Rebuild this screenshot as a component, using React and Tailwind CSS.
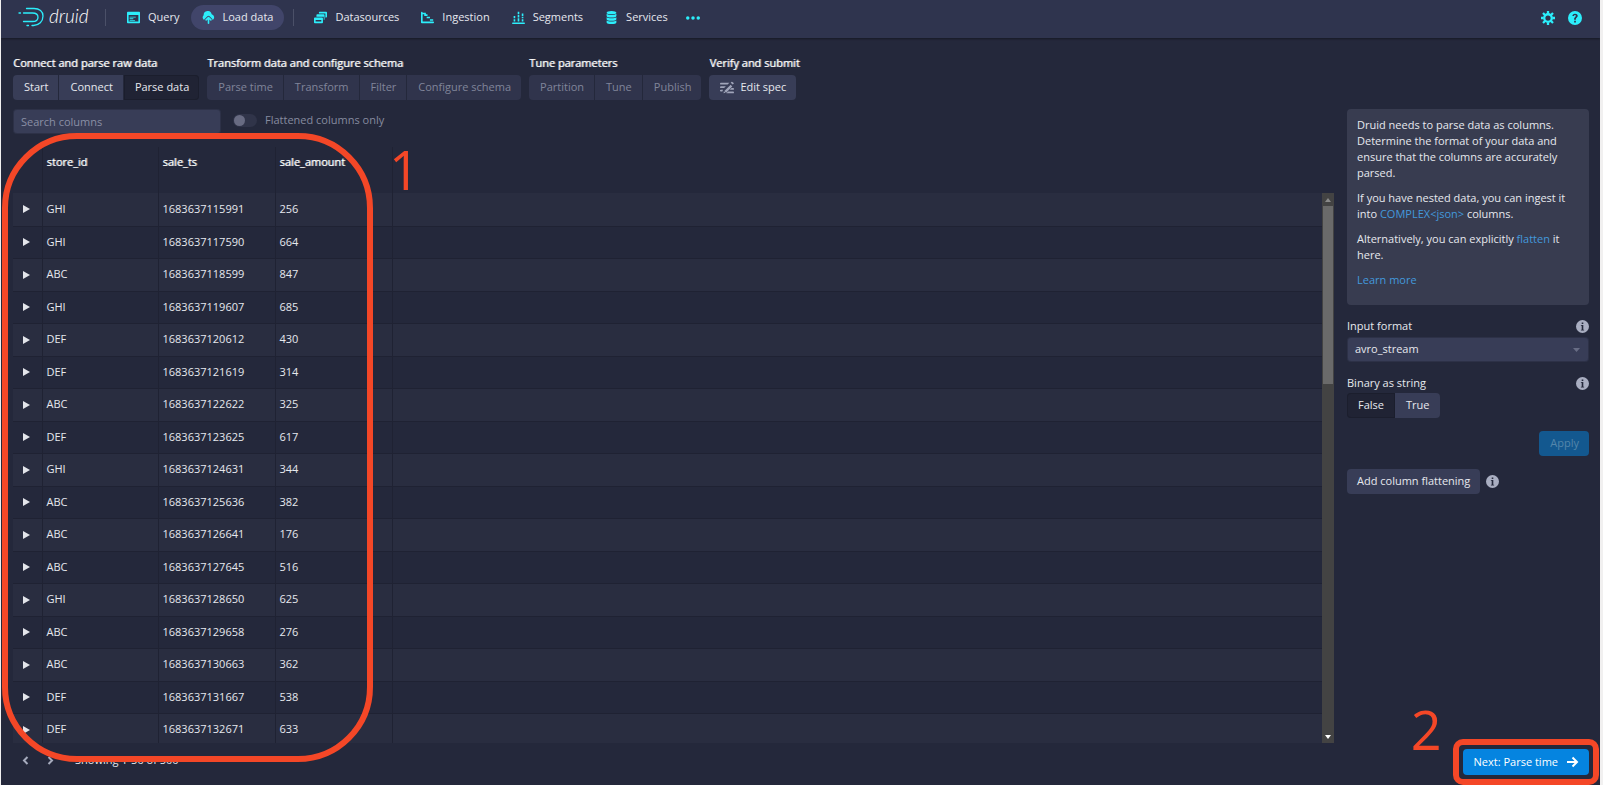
import { useState } from 'react'

const ROWS = [
  ['GHI', '1683637115991', '256'],
  ['GHI', '1683637117590', '664'],
  ['ABC', '1683637118599', '847'],
  ['GHI', '1683637119607', '685'],
  ['DEF', '1683637120612', '430'],
  ['DEF', '1683637121619', '314'],
  ['ABC', '1683637122622', '325'],
  ['DEF', '1683637123625', '617'],
  ['GHI', '1683637124631', '344'],
  ['ABC', '1683637125636', '382'],
  ['ABC', '1683637126641', '176'],
  ['ABC', '1683637127645', '516'],
  ['GHI', '1683637128650', '625'],
  ['ABC', '1683637129658', '276'],
  ['ABC', '1683637130663', '362'],
  ['DEF', '1683637131667', '538'],
  ['DEF', '1683637132671', '633'],
]

const STEP_GROUPS = [
  { title: 'Connect and parse raw data', steps: ['Start', 'Connect', 'Parse data'], enabled: true },
  { title: 'Transform data and configure schema', steps: ['Parse time', 'Transform', 'Filter', 'Configure schema'] },
  { title: 'Tune parameters', steps: ['Partition', 'Tune', 'Publish'] },
]

const ICONS = {
  query: 'M15 1H1a1 1 0 0 0-1 1v12a1 1 0 0 0 1 1h14a1 1 0 0 0 1-1V2a1 1 0 0 0-1-1zm-1 12H2V5h12v8zM3.5 8h7a.5.5 0 0 0 0-1h-7a.5.5 0 0 0 0 1zm0 2h4a.5.5 0 0 0 0-1h-4a.5.5 0 0 0 0 1zm0 2h6a.5.5 0 0 0 0-1h-6a.5.5 0 0 0 0 1z',
  upload: 'M8.7 7.3a1 1 0 0 0-1.4 0l-3 3a1 1 0 0 0 1.4 1.4L7 10.4V15a1 1 0 0 0 2 0v-4.6l1.3 1.3a1 1 0 0 0 1.4-1.4l-3-3zM12 4h-.1A5 5 0 0 0 2 5v.3A3.500 3.500 0 0 0 2.600 11a2 2 0 0 1 1-1.600l3-3a2 2 0 0 1 2.800 0l3 3c.4.400.6 1 .6 1.600A3.800 3.800 0 0 0 12 4z',
  datasources: 'M1 8a1 1 0 0 0-1 1v5a1 1 0 0 0 1 1h9a1 1 0 0 0 1-1V9a1 1 0 0 0-1-1zm1 3h7v2H2zM3 7V5a1 1 0 0 1 1-1h8a1 1 0 0 1 1 1v5a1 1 0 0 1-1 1V7zM6 3V2a1 1 0 0 1 1-1h8a1 1 0 0 1 1 1v5a1 1 0 0 1-1 1h-1V3z',
  ingestion: 'M4 6h4V4H4zm3 3h4V7H7zm4 1v2h4v-2zM15 13H2V2a1 1 0 0 0-2 0v12a1 1 0 0 0 1 1h14a1 1 0 0 0 0-2zM2 2h4v2H2z',
  segments: 'M15 14H1a1 1 0 0 0 0 2h14a1 1 0 0 0 0-2zM2 10h2v3H2zM2 6h2v3H2zM7 9h2v4H7zM7 5h2v3H7zM7 1h2v3H7zM12 10h2v3h-2zM12 7h2v2h-2zM12 3h2v3h-2z',
  services: 'M8 4c3.300 0 6-.9 6-2s-2.700-2-6-2-6 .9-6 2 2.700 2 6 2zm-6-.5V6c0 1.100 2.700 2 6 2s6-.9 6-2V3.500C13 4.500 10.700 5 8 5s-5-.5-6-1.500zM2 7.600V10c0 1.100 2.700 2 6 2s6-.9 6-2V7.600C13 8.500 10.700 9 8 9s-5-.5-6-1.400zm0 4V14c0 1.100 2.700 2 6 2s6-.9 6-2v-2.400c-1 .9-3.300 1.400-6 1.400s-5-.5-6-1.400z',
  more: 'M2 6a2 2 0 1 0 0 4 2 2 0 0 0 0-4zm6 0a2 2 0 1 0 0 4 2 2 0 0 0 0-4zm6 0a2 2 0 1 0 0 4 2 2 0 0 0 0-4z',
  help: 'M8 0a8 8 0 1 0 0 16A8 8 0 0 0 8 0zM7 13v-2h2v2zm4-6.700c-.2.500-.6.900-1.100 1.400-.5.500-.9.800-.9 1.300V10H7V9c0-1 .6-1.600 1.200-2.200.5-.5.8-.8.8-1.300 0-.6-.4-.9-1-.9s-1.100.4-1.100 1.200H5C5 4 6.200 3 8 3s3.100.9 3.100 2.400c0 .3 0 .6-.1.900z',
  info: 'M8 0a8 8 0 1 0 0 16A8 8 0 0 0 8 0zM7 3h2v2H7zm3 10H6v-1h1V7H6V6h3v6h1z',
  edit: 'M1 8h3.700l2-2H1a1 1 0 0 0 0 2zm0-4h7.700l2-2H1a1 1 0 0 0 0 2zm0 6a1 1 0 0 0-.1 2h1.800l.8-2zm11.200-5.800L5 11.400 7 13.400l7-7.200zM15.700 2.300l-1.500-1.200a.9.900 0 0 0-1.200 0l-.8.900 2.300 2 1-.9a.6.600 0 0 0 .2-.800zM4 14l2.200-.5-1.700-1.700zM15 8h-1.800l-2 2H15a1 1 0 0 0 0-2zm0 4H9.300l-2 2H15a1 1 0 0 0 0-2z',
}

function Icon({ name, className = 'size-[13px]' }) {
  return (
    <svg viewBox="0 0 16 16" className={`shrink-0 ${className}`} fill="currentColor" fillRule="evenodd" aria-hidden="true">
      <path d={ICONS[name]} />
    </svg>
  )
}

function Cog() {
  return (
    <svg viewBox="0 0 16 16" className="size-[14px] text-[#2ceefb]" fill="none" stroke="currentColor" aria-hidden="true">
      <circle cx="8" cy="8" r="4.300" strokeWidth="2.600" />
      <path d="M8 0v3M8 13v3M0 8h3M13 8h3M2.300 2.300l2.200 2.200M11.500 11.500l2.200 2.200M2.300 13.700l2.200-2.200M11.500 4.500l2.200-2.200" strokeWidth="2.600" />
    </svg>
  )
}

function Logo() {
  return (
    <a href="#home" className="flex w-[73px] items-center text-white">
      <svg viewBox="0 0 27 21" className="h-[21px] w-[27px] shrink-0" fill="none" stroke="#2ceefb" strokeWidth="1.300" strokeLinecap="round" aria-hidden="true">
        <path d="M9.500 1.500h7.500c5.500 0 9 3 9 7.500 0 5.500-4 9.500-9.500 9.500H15" />
        <path d="M6.500 6h9c3.500 0 5.500 1.500 5.500 4.200 0 3-2.500 4.300-5.500 4.300H6.500M2 6h1.500M10 18.500h1.500" />
      </svg>
      <span className="ml-[5px] pb-[3px] font-['Lato',sans-serif] text-[19px] leading-6 font-light italic">druid</span>
    </a>
  )
}

function NavButton({ icon, active, children }) {
  return (
    <button className={`flex h-[25px] items-center gap-2 rounded-full px-[11px] ${active ? 'bg-[#41456a]' : 'hover:bg-[#393e5c]'}`}>
      <Icon name={icon} className="size-[13px] text-[#2ceefb]" />
      {children}
    </button>
  )
}

function Header() {
  return (
    <header className="flex h-[38px] shrink-0 items-center bg-[#2f344e] pb-[3px] pl-4 shadow-[0_1px_2px_rgba(0,0,0,0.4)]">
      <Logo />
      <div className="ml-[15px] h-[17px] w-px bg-[#4b5068]" />
      <nav className="ml-[10px] flex items-center">
        <NavButton icon="query">Query</NavButton>
        <NavButton icon="upload" active>Load data</NavButton>
        <div className="mx-[9px] h-[17px] w-px bg-[#4b5068]" />
        <NavButton icon="datasources">Datasources</NavButton>
        <NavButton icon="ingestion">Ingestion</NavButton>
        <NavButton icon="segments">Segments</NavButton>
        <NavButton icon="services">Services</NavButton>
        <button aria-label="More" className="ml-[7px]"><Icon name="more" className="size-[14px] text-[#2ceefb]" /></button>
      </nav>
      <div className="ml-auto flex items-center gap-[13px] pr-[18px]">
        <button aria-label="Settings"><Cog /></button>
        <button aria-label="Help"><Icon name="help" className="size-[14px] text-[#2ceefb]" /></button>
      </div>
    </header>
  )
}

function StepTitle({ children }) {
  return <div className="mb-1 leading-4 text-white [text-shadow:1px_0_0_rgba(255,255,255,0.6)]">{children}</div>
}

function StepNav() {
  const [current, setCurrent] = useState('Parse data')
  return (
    <div className="flex gap-2">
      {STEP_GROUPS.map(group => (
        <div key={group.title}>
          <StepTitle>{group.title}</StepTitle>
          <div className="flex gap-px">
            {group.steps.map(step => (
              <button key={step} disabled={!group.enabled} onClick={() => setCurrent(step)}
                className={`h-[25px] pr-[10px] pl-[11px] first:rounded-l-sm last:rounded-r-sm ${
                  !group.enabled ? 'bg-[#30344c] text-[#80859a]'
                    : step === current ? 'bg-[#202334] shadow-[inset_0_0_0_1px_#1b1e2d]' : 'bg-[#383d57]'
                }`}>
                {step}
              </button>
            ))}
          </div>
        </div>
      ))}
      <div>
        <StepTitle>Verify and submit</StepTitle>
        <button className="flex h-[25px] items-center gap-[6px] rounded-sm bg-[#383d57] pr-[10px] pl-[11px]">
          <Icon name="edit" className="size-[14px] text-[#a0a5ba]" />
          Edit spec
        </button>
      </div>
    </div>
  )
}

function DataTable() {
  return (
    <div className="flex min-h-0 flex-1 flex-col">
      <div className="relative min-h-0 flex-1 overflow-hidden">
        <table className="w-full table-fixed border-collapse text-left">
          <colgroup>
            <col className="w-[29px]" />
            <col className="w-[116px]" />
            <col className="w-[117px]" />
            <col className="w-[117px]" />
            <col />
          </colgroup>
          <thead>
            <tr className="h-[46px]">
              <th className="border-r border-[#1f2233]"></th>
              {['store_id', 'sale_ts', 'sale_amount'].map(c => (
                <th key={c} className="border-r border-[#1f2233] pb-4 pl-1 font-normal text-white [text-shadow:1px_0_0_rgba(255,255,255,0.6)]">{c}</th>
              ))}
              <th></th>
            </tr>
          </thead>
          <tbody>
            {ROWS.map(row => (
              <tr key={row[1]} className="border-b border-[#1f2233] odd:h-[33px] odd:bg-[#292d40] even:h-8">
                <td className="border-r border-[#1f2233] pl-[10px]">
                  <button aria-label="Expand row" className="block">
                    <svg viewBox="0 0 7 8" className="h-2 w-[7px]" fill="#e3e5ea"><path d="M0 0l7 4-7 4z" /></svg>
                  </button>
                </td>
                {row.map((v, i) => (
                  <td key={i} className="border-r border-[#1f2233] pl-1">{v}</td>
                ))}
                <td></td>
              </tr>
            ))}
          </tbody>
        </table>
        {/* scroll track lies over the end of the rows */}
        <div className="absolute top-[46px] right-0 bottom-0 flex w-3 flex-col items-center bg-[#434343]">
          <svg viewBox="0 0 12 13" className="h-[13px] w-3 shrink-0" fill="#8a8a8a"><path d="M3 9l3-4 3 4z" /></svg>
          <div className="h-[178px] w-[10px] bg-[#6a6a6a]" />
          <svg viewBox="0 0 12 13" className="mt-auto h-[13px] w-3 shrink-0" fill="#ffffff"><path d="M3 5l3 4 3-4z" /></svg>
        </div>
      </div>
      <div className="flex h-[42px] shrink-0 items-start pt-[9px] pl-[9px]">
        <button aria-label="Previous page" className="pt-1">
          <svg viewBox="0 0 7 9" className="h-[9px] w-[7px]" fill="none" stroke="#a6abbd" strokeWidth="2"><path d="M5.500 1L2 4.500 5.500 8" /></svg>
        </button>
        <button aria-label="Next page" className="ml-[18px] pt-1">
          <svg viewBox="0 0 7 9" className="h-[9px] w-[7px]" fill="none" stroke="#a6abbd" strokeWidth="2"><path d="M1.500 1L5 4.500 1.500 8" /></svg>
        </button>
        <span className="ml-[21px] leading-4">Showing 1-50 of 500</span>
      </div>
    </div>
  )
}

function InfoButton({ label }) {
  return (
    <button aria-label={label} className="text-[#a9aec1]"><Icon name="info" className="size-[13px]" /></button>
  )
}

function Sidebar() {
  const [binary, setBinary] = useState(false)
  return (
    <aside className="flex w-[242px] shrink-0 flex-col">
      <div className="flex flex-col gap-[9px] rounded-sm bg-[#383c50] px-[10px] pt-2 pb-[17px] leading-4">
        <p>Druid needs to parse data as columns. Determine the format of your data and ensure that the columns are accurately parsed.</p>
        <p>If you have nested data, you can ingest it into <a href="#json" className="text-[#4399dc]">COMPLEX&lt;json&gt;</a> columns.</p>
        <p>Alternatively, you can explicitly <a href="#flatten" className="text-[#4399dc]">flatten</a> it here.</p>
        <p><a href="#learn" className="text-[#4399dc]">Learn more</a></p>
      </div>

      <div className="mt-[11px] mb-px flex h-5 items-center justify-between">
        <label htmlFor="format">Input format</label>
        <InfoButton label="About input format" />
      </div>
      <div className="relative">
        <select id="format" defaultValue="avro_stream"
          className="h-[25px] w-full appearance-none rounded-sm bg-[#383d57] pl-2 shadow-[inset_0_0_0_1px_rgba(20,22,35,0.3)]">
          <option>avro_stream</option>
          <option>json</option>
          <option>csv</option>
        </select>
        <svg viewBox="0 0 7 4" className="pointer-events-none absolute top-[11px] right-[9px] h-1 w-[7px]" fill="#686d85"><path d="M0 0h7L3.500 4z" /></svg>
      </div>

      <div className="mt-[11px] flex h-5 items-center justify-between">
        <span id="binary">Binary as string</span>
        <InfoButton label="About binary as string" />
      </div>
      <div role="group" aria-labelledby="binary" className="flex">
        <button onClick={() => setBinary(false)}
          className={`h-[25px] rounded-l-sm px-[11px] ${!binary ? 'bg-[#202334] shadow-[inset_0_0_0_1px_#1b1e2d]' : 'bg-[#383d57]'}`}>
          False
        </button>
        <button onClick={() => setBinary(true)}
          className={`h-[25px] rounded-r-sm px-[11px] ${binary ? 'bg-[#202334] shadow-[inset_0_0_0_1px_#1b1e2d]' : 'bg-[#383d57]'}`}>
          True
        </button>
      </div>

      <button disabled className="mt-[13px] h-[25px] self-end rounded-sm bg-[#13588f] pr-[10px] pl-[11px] text-[#5486ab]">Apply</button>

      <div className="mt-[13px] flex items-center gap-[6px]">
        <button className="h-[25px] rounded-sm bg-[#383d57] px-[10px]">Add column flattening</button>
        <InfoButton label="About column flattening" />
      </div>

      <div className="relative mt-auto mb-[10px] self-end">
        <button className="flex h-[26px] items-center gap-2 rounded-sm bg-[#0584e0] pr-[10px] pl-[11px] text-white">
          Next: Parse time
          <svg viewBox="0 0 13 12" className="h-3 w-[13px]" fill="none" stroke="currentColor" strokeWidth="2"><path d="M1 6h10M6.500 1.500L11 6l-4.500 4.500" /></svg>
        </button>
        <div className="pointer-events-none absolute -inset-[10px] rounded-[10px] border-[6px] border-[#f44727]" />
        <span className="absolute right-full bottom-[19px] mr-[21px] text-[54px] leading-[54px] text-[#f44727]">2</span>
      </div>
    </aside>
  )
}

export default function App() {
  return (
    <div className="h-screen bg-[#f1f0f0] pr-[3px] pl-px">
      <div className="relative flex h-full flex-col overflow-hidden bg-[#24283b] font-['Open_Sans','Noto_Sans',sans-serif] text-[11px] text-[#e6e8ee]">
        <Header />
        <main className="flex min-h-0 flex-1 flex-col pt-[17px] pr-[11px] pl-3">
          <StepNav />
          <div className="mt-[9px] flex min-h-0 flex-1 gap-[13px]">
            <div className="flex min-w-0 flex-1 flex-col">
              <div className="mb-[13px] flex items-start">
                <input aria-label="Search columns" placeholder="Search columns"
                  className="h-[25px] w-[208px] rounded-sm bg-[#383d57] px-2 shadow-[inset_0_0_0_1px_rgba(20,22,35,0.3)] outline-none placeholder:text-[#8a8fa5]" />
                <label className="ml-3 flex h-[22px] items-center gap-2 text-[#868b9f]">
                  <input type="checkbox" disabled className="peer sr-only" />
                  <span className="flex h-[13px] w-6 items-center rounded-full bg-[#303449] px-px">
                    <span className="size-[11px] rounded-full bg-[#686b82]" />
                  </span>
                  Flattened columns only
                </label>
              </div>
              <DataTable />
            </div>
            <Sidebar />
          </div>
        </main>

        {/* callout drawn over the parsed columns */}
        <div className="pointer-events-none absolute top-[133px] bottom-[23px] left-px w-[371px] rounded-[75px] border-[6px] border-[#f44727]" />
        <span className="absolute top-[142px] left-[388px] text-[54px] leading-[54px] text-[#f44727]">1</span>
      </div>
    </div>
  )
}
